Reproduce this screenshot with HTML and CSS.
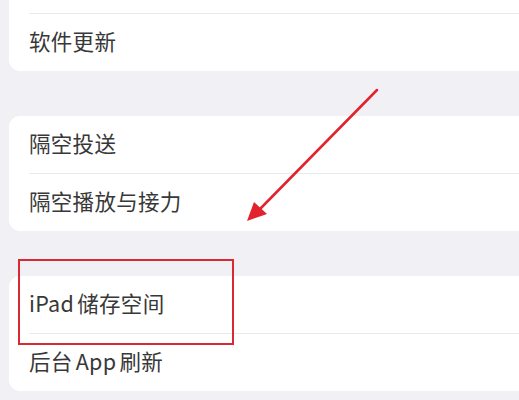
FILE: index.html
```html
<!DOCTYPE html>
<html lang="zh-CN">
<head>
<meta charset="utf-8">
<title>通用</title>
<link rel="stylesheet" href="styles.css">
</head>
<body>
<div class="page">
  <div class="card">
    <div class="row row-hidden"></div>
    <div class="row">软件更新</div>
  </div>
  <div class="card">
    <div class="row">隔空投送</div>
    <div class="row">隔空播放与接力</div>
  </div>
  <div class="card">
    <div class="row">iPad 储存空间</div>
    <div class="row">后台 App 刷新</div>
  </div>
</div>
<div class="highlight"></div>
<svg class="arrow" width="519" height="400" viewBox="0 0 519 400">
  <line x1="377" y1="90" x2="259" y2="210" stroke="#e2232d" stroke-width="2.5" stroke-linecap="round"/>
  <polygon points="247,221 254,202 267,214" fill="#e2232d"/>
</svg>
</body>
</html>
```
FILE: styles.css
```css
html, body {
  margin: 0;
  padding: 0;
  background: #f0f0f5;
  width: 519px;
  height: 400px;
  overflow: hidden;
}
body {
  position: relative;
  font-family: "Noto Sans CJK SC", "Noto Sans", sans-serif;
}
.page {
  margin-top: -44px;
  padding-left: 9px;
  display: flex;
  flex-direction: column;
  gap: 45px;
}
.card {
  background: #fff;
  border-radius: 11px 0 0 11px;
  padding-left: 20px;
}
.row {
  height: 57px;
  box-sizing: border-box;
  padding-bottom: 4px;
  display: flex;
  align-items: center;
  font-size: 21.5px;
  color: #383838;
  letter-spacing: 0.3px;
  word-spacing: -2px;
}
.row + .row {
  height: 58px;
  border-top: 1px solid #e9e9ee;
}
.highlight {
  position: absolute;
  left: 18px;
  top: 259px;
  width: 212px;
  height: 82px;
  border: 2px solid #d92a33;
}
.arrow {
  position: absolute;
  left: 0;
  top: 0;
}
```
